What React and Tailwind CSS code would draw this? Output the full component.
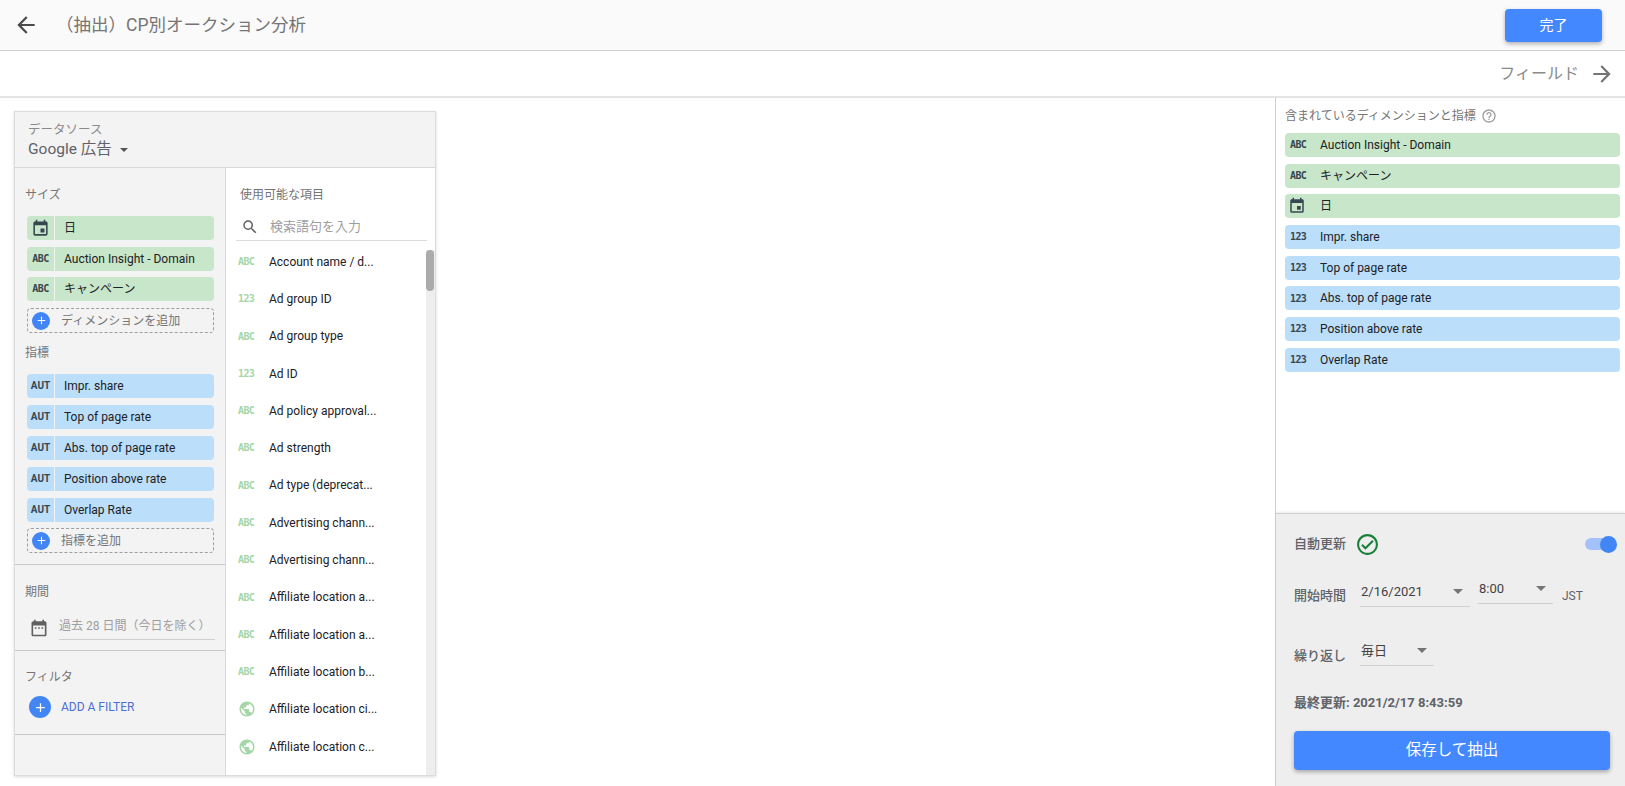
import React from "react";
import {
  MdArrowBack,
  MdArrowForward,
  MdEvent,
  MdDateRange,
  MdSearch,
  MdPublic,
  MdHelpOutline,
  MdAdd,
  MdOutlineCheckCircle,
  MdArrowDropDown,
} from "react-icons/md";

const FONT = { fontFamily: '"Roboto", "Noto Sans CJK JP", sans-serif' };

const DIMS = ["Auction Insight - Domain", "キャンペーン"];
const METRICS = ["Impr. share", "Top of page rate", "Abs. top of page rate", "Position above rate", "Overlap Rate"];

const FIELDS = [
  ["abc", "Account name / d..."],
  ["123", "Ad group ID"],
  ["abc", "Ad group type"],
  ["123", "Ad ID"],
  ["abc", "Ad policy approval..."],
  ["abc", "Ad strength"],
  ["abc", "Ad type (deprecat..."],
  ["abc", "Advertising chann..."],
  ["abc", "Advertising chann..."],
  ["abc", "Affiliate location a..."],
  ["abc", "Affiliate location a..."],
  ["abc", "Affiliate location b..."],
  ["geo", "Affiliate location ci..."],
  ["geo", "Affiliate location c..."],
];

function TypeTag({ children, className = "font-bold" }) {
  return (
    <span className={`[font-family:'DejaVu_Sans_Mono',monospace] text-[10px] tracking-[-0.6px] ${className}`}>
      {children}
    </span>
  );
}

function Chip({ icon, label, blue, className = "" }) {
  const bg = blue ? "bg-[#bbdefb]" : "bg-[#c8e6c9]";
  return (
    <div className={`flex h-6 w-[187px] overflow-hidden rounded-sm text-xs text-[#202124] ${className}`}>
      <div className={`flex w-[27px] items-center justify-center ${bg} text-[#37474f]`}>{icon}</div>
      <div className={`ml-px flex flex-1 items-center pl-[9px] ${bg}`}>{label}</div>
    </div>
  );
}

function AddRow({ label }) {
  return (
    <div className="flex h-[25px] w-[187px] items-center rounded-sm border border-dashed border-[#9e9e9e] pl-[4px] text-xs text-[#757575]">
      <span className="flex h-[18px] w-[18px] items-center justify-center rounded-full bg-[#4285f4] text-white">
        <MdAdd size={13} />
      </span>
      <span className="ml-[11px]">{label}</span>
    </div>
  );
}

function IncludedRow({ icon, label, blue }) {
  return (
    <div className={`flex h-6 items-center rounded-sm text-xs text-[#202124] ${blue ? "bg-[#bbdefb]" : "bg-[#c8e6c9]"}`}>
      <span className="flex w-[35px] items-center justify-start pl-[5px] text-[#37474f]">{icon}</span>
      {label}
    </div>
  );
}

function Select({ value, width }) {
  return (
    <div className={`flex h-[26px] items-start justify-between border-b border-[#d0d0d0] text-[13px] font-normal text-[#424242] ${width}`}>
      <span className="pl-px leading-[22px]">{value}</span>
      <MdArrowDropDown size={24} className="-mt-[2px] text-[#757575]" />
    </div>
  );
}

export default function App() {
  return (
    <div className="flex h-[786px] w-[1625px] flex-col overflow-hidden bg-white" style={FONT}>
      {/* TOP BAR */}
      <div className="flex h-[51px] shrink-0 items-center border-b border-[#cfcfcf] bg-[#fafafa] pl-[13px] pr-[23px]">
        <MdArrowBack size={26} className="text-[#4a4a4a]" />
        <span className="ml-[17px] text-[17.5px] text-[#757575]">（抽出）CP別オークション分析</span>
        <button className="ml-auto h-[33px] w-[97px] rounded-sm bg-[#4488ff] text-sm text-white shadow-[0_2px_4px_rgba(0,0,0,0.3)]">
          完了
        </button>
      </div>

      {/* FIELD BAR */}
      <div className="flex h-[47px] shrink-0 items-center justify-end border-b-2 border-[#e4e4e4] pr-[10px] text-[#8a8a8a]">
        <span className="mr-[10px] text-base">フィールド</span>
        <MdArrowForward size={26} className="text-[#757575]" />
      </div>

      <div className="flex min-h-0 flex-1">
        {/* EDITOR */}
        <div className="min-w-0 flex-1 pl-[14px] pt-[13px]">
          <div className="flex h-[665px] w-[422px] flex-col border border-[#dcdcdc] shadow-[0_1px_3px_rgba(0,0,0,0.15)]">
            <div className="h-[56px] shrink-0 border-b border-[#d9d9d9] bg-[#f3f3f3] pl-[13px] pt-[10px]">
              <div className="text-[12.5px] leading-[16px] text-[#8a8a8a]">データソース</div>
              <div className="flex items-center text-[15.5px] leading-[22px] text-[#5f6368]">
                Google 広告
                <span className="ml-[8px] mt-px h-0 w-0 border-x-[4px] border-t-[4px] border-x-transparent border-t-[#555]" />
              </div>
            </div>

            <div className="flex min-h-0 flex-1">
              {/* LEFT COLUMN */}
              <div className="w-[211px] shrink-0 border-r border-[#d9d9d9] bg-[#f3f3f3]">
                <div className="pl-[10px] pt-[19px] text-xs leading-[16px] text-[#757575]">サイズ</div>
                <div className="mt-[13px] flex flex-col pl-[12px]">
                  <Chip icon={<MdEvent size={19} />} label="日" />
                  <Chip className="mt-[7px]" icon={<TypeTag>ABC</TypeTag>} label={DIMS[0]} />
                  <Chip className="mt-[6px]" icon={<TypeTag>ABC</TypeTag>} label={DIMS[1]} />
                  <div className="mt-[7px]">
                    <AddRow label="ディメンションを追加" />
                  </div>
                </div>

                <div className="pl-[10px] pt-[12px] text-xs leading-[16px] text-[#757575]">指標</div>
                <div className="mt-[13px] flex flex-col gap-[7px] pl-[12px]">
                  {METRICS.map(m => (
                    <Chip key={m} blue label={m} icon={<span className="text-[10px] font-bold">AUT</span>} />
                  ))}
                </div>
                <div className="mt-[6px] border-b border-[#c9c9c9] pb-[11px] pl-[12px]">
                  <AddRow label="指標を追加" />
                </div>

                <div className="pl-[10px] pt-[19px] text-xs leading-[16px] text-[#757575]">期間</div>
                <div className="flex border-b border-[#c9c9c9] pb-[10px] pl-[14px] pt-[18px]">
                  <MdDateRange size={20} className="text-[#616161]" />
                  <div className="ml-[10px] h-[22px] w-[156px] border-b border-[#d0d0d0] text-xs leading-[17px] text-[#9e9e9e]">
                    過去 28 日間（今日を除く）
                  </div>
                </div>

                <div className="pl-[10px] pt-[18px] text-xs leading-[16px] text-[#757575]">フィルタ</div>
                <div className="flex h-[50px] items-start border-b border-[#c9c9c9] pl-[14px] pt-[11px]">
                  <span className="flex h-[22px] w-[22px] items-center justify-center rounded-full bg-[#4285f4] text-white">
                    <MdAdd size={15} />
                  </span>
                  <span className="ml-[10px] text-xs leading-[22px] text-[#4a6fd4]">ADD A FILTER</span>
                </div>
              </div>

              {/* AVAILABLE FIELDS */}
              <div className="flex min-w-0 flex-1 flex-col bg-white">
                <div className="pl-[14px] pt-[19px] text-xs leading-[16px] text-[#757575]">使用可能な項目</div>
                <div className="ml-[10px] mr-[8px] mt-[15px] flex h-[23px] items-start border-b border-[#dcdcdc] pl-[5px]">
                  <MdSearch size={18} className="text-[#616161]" />
                  <span className="ml-[11px] text-[13px] leading-[18px] text-[#9e9e9e]">検索語句を入力</span>
                </div>
                <div className="mt-[9px] flex min-h-0 flex-1">
                  <div className="min-w-0 flex-1 overflow-hidden">
                    <div className="-mt-[7px]">
                      {FIELDS.map(([type, name], i) => (
                        <div key={i} className="flex h-[37.3px] items-center pl-[12px] text-xs text-[#202124]">
                          <span className="flex w-[31px] items-center text-[#a5d6a7]">
                            {type === "geo" ? (
                              <MdPublic size={18} />
                            ) : (
                              <TypeTag>{type === "abc" ? "ABC" : "123"}</TypeTag>
                            )}
                          </span>
                          {name}
                        </div>
                      ))}
                    </div>
                  </div>
                  <div className="w-[9px] shrink-0 bg-[#eeeeee]">
                    <div className="h-[41px] w-[8px] rounded bg-[#ababab]" />
                  </div>
                </div>
              </div>
            </div>
          </div>
        </div>

        {/* RIGHT PANEL */}
        <div className="flex w-[350px] shrink-0 flex-col border-l border-[#cfcfcf]">
          <div className="flex-1 pl-[9px] pr-[5px] pt-[10px]">
            <div className="flex h-[16px] items-center text-xs text-[#757575]">
              含まれているディメンションと指標
              <MdHelpOutline size={16} className="ml-[5px] text-[#9e9e9e]" />
            </div>
            <div className="mt-[9px] flex flex-col gap-[6.7px]">
              <IncludedRow icon={<TypeTag>ABC</TypeTag>} label={DIMS[0]} />
              <IncludedRow icon={<TypeTag>ABC</TypeTag>} label={DIMS[1]} />
              <IncludedRow icon={<MdEvent size={18} className="-ml-[2px]" />} label="日" />
              {METRICS.map(m => (
                <IncludedRow key={m} blue icon={<TypeTag>123</TypeTag>} label={m} />
              ))}
            </div>
          </div>

          <div className="h-[273px] shrink-0 border-t border-[#d0d0d0] bg-[#eeeeee] pl-[18px] pr-[8px] shadow-[0_-1px_2px_rgba(0,0,0,0.08)]">
            <div className="mt-[18px] flex h-[24px] items-center text-[13px] font-medium text-[#5f6368]">
              自動更新
              <MdOutlineCheckCircle size={25} className="ml-[9px] text-[#188038]" />
              <div className="ml-auto flex items-center">
                <span className="h-[12px] w-[23px] rounded-full bg-[#a3c2fb]" />
                <span className="-ml-[8px] h-[17px] w-[17px] rounded-full bg-[#4285f4]" />
              </div>
            </div>
            <div className="mt-[25px] flex items-start text-[13px] font-medium text-[#5f6368]">
              <span className="mt-[5px] w-[66px]">開始時間</span>
              <Select value="2/16/2021" width="w-[110px]" />
              <div className="-mt-[3px] ml-[8px]">
                <Select value="8:00" width="w-[75px]" />
              </div>
              <span className="ml-[9px] mt-[7px] text-xs font-normal">JST</span>
            </div>
            <div className="mt-[33px] flex items-start text-[13px] font-medium text-[#5f6368]">
              <span className="mt-[6px] w-[66px]">繰り返し</span>
              <Select value="毎日" width="w-[74px]" />
            </div>
            <div className="mt-[29px] text-[13px] font-bold leading-[16px] text-[#5f6368]">最終更新: 2021/2/17 8:43:59</div>
            <button className="mt-[20px] h-[39px] w-[316px] rounded-sm bg-[#4488ff] text-[15.5px] text-white shadow-[0_2px_4px_rgba(0,0,0,0.3)]">
              保存して抽出
            </button>
          </div>
        </div>
      </div>
    </div>
  );
}
